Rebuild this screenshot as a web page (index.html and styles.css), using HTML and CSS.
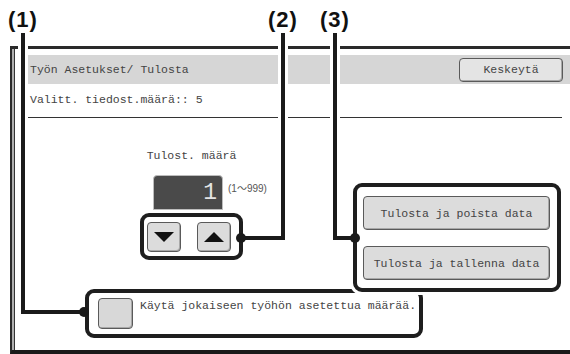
FILE: index.html
```html
<!DOCTYPE html>
<html>
<head>
  <title>Työn Asetukset / Tulosta</title>
  <link rel="stylesheet" href="styles.css">
</head>
<body>
  <div class="page">
    <div class="frame">
      <div class="titlebar">
        <span class="title">Työn Asetukset/ Tulosta</span>
        <button class="btn btn-cancel">Keskeytä</button>
      </div>
      <div class="info">Valitt. tiedost.määrä:: 5</div>

      <div class="main">
        <div class="row">
          <div class="counter">
            <div class="counter-label">Tulost. määrä</div>
            <div class="display-row">
              <div class="display">1</div>
              <span class="range">(1〜999)</span>
            </div>
            <div class="group group-arrows">
              <button class="btn arrow"><span class="tri tri-down"></span></button>
              <button class="btn arrow"><span class="tri tri-up"></span></button>
            </div>
          </div>

          <div class="group group-print">
            <button class="btn btn-wide">Tulosta ja poista data</button>
            <button class="btn btn-wide">Tulosta ja tallenna data</button>
          </div>
        </div>

        <div class="group group-check">
          <span class="checkbox"></span>
          <span class="check-label">Käytä jokaiseen työhön asetettua määrää.</span>
        </div>
      </div>
    </div>

    <!-- callout (1) -->
    <div class="label label-1">(1)</div>
    <div class="vline vline-1"></div>
    <div class="hline hline-1"></div>
    <div class="dot dot-1"></div>

    <!-- callout (2) -->
    <div class="label label-2">(2)</div>
    <div class="vline vline-2"></div>
    <div class="hline hline-2"></div>
    <div class="dot dot-2"></div>

    <!-- callout (3) -->
    <div class="label label-3">(3)</div>
    <div class="vline vline-3"></div>
    <div class="hline hline-3"></div>
    <div class="dot dot-3"></div>
  </div>
</body>
</html>
```

FILE: styles.css
```css
body {
  margin: 0;
  background: #fff;
  font-family: "Liberation Mono", "DejaVu Sans Mono", monospace;
  font-size: 11.5px;
  color: #444;
}

.page {
  position: relative;
  width: 570px;
  height: 354px;
  overflow: hidden;
}

/* screen frame */
.frame {
  box-sizing: border-box;
  height: 308px;
  margin: 46px 0 0 10px;
  padding-left: 16px;
  border-top: 3px solid #2a2a2a;
  border-bottom: 4px solid #1a1a1a;
  border-left: 2px solid #2a2a2a;
  box-shadow: inset 2px 0 0 #b0b0b0, inset 3px 0 0 #333;
}

.titlebar {
  display: flex;
  align-items: center;
  justify-content: space-between;
  height: 29px;
  margin-top: 6px;
  padding: 0 7px 0 2px;
  background: #d6d6d6;
}

.btn {
  box-sizing: border-box;
  font: inherit;
  color: #444;
  background: #dcdcdc;
  border: 1px solid #5a5a5a;
  border-radius: 4px;
  box-shadow: inset -1px -1px 0 #a8a8a8;
  padding: 0;
}

.btn-cancel {
  width: 104px;
  height: 24px;
  background: #e4e4e4;
}

.info {
  margin-right: 8px;
  padding: 9px 0 10px 2px;
  line-height: 14px;
  border-bottom: 1px solid #333;
}

/* main area */
.row {
  display: flex;
  align-items: flex-start;
}

.counter {
  flex: none;
  width: 103px;
  margin: 31px 0 0 112px;
}

.counter-label {
  text-align: center;
  line-height: 14px;
  white-space: nowrap;
}

.display-row {
  display: flex;
  align-items: flex-start;
  margin: 12px 0 0 13px;
  white-space: nowrap;
}

.display {
  box-sizing: border-box;
  flex: none;
  width: 70px;
  height: 35px;
  padding-right: 5px;
  background: #4a4a4a;
  border: 1px solid #bdbdbd;
  border-radius: 4px 4px 0 0;
  color: #e4e4e4;
  font-family: "Liberation Mono", monospace;
  font-size: 23px;
  line-height: 35px;
  text-align: right;
}

.range {
  flex: none;
  margin: 8px 0 0 5px;
  font-family: "Liberation Sans", "Noto Sans CJK JP", sans-serif;
  font-size: 10px;
  line-height: 12px;
  color: #555;
}

.group {
  box-sizing: border-box;
  flex: none;
  border: 4px solid #1e1e1e;
  border-radius: 9px;
  background: #fff;
}

.group-arrows {
  display: flex;
  gap: 16px;
  width: 103px;
  margin-top: 3px;
  padding: 5px 8px 4px 3px;
}

.arrow {
  display: flex;
  align-items: center;
  justify-content: center;
  flex: none;
  width: 34px;
  height: 30px;
}

.tri {
  width: 0;
  height: 0;
  border-left: 10px solid transparent;
  border-right: 10px solid transparent;
}

.tri-down {
  border-top: 10px solid #111;
}

.tri-up {
  border-bottom: 10px solid #111;
}

.group-print {
  position: relative;
  z-index: 2;
  display: flex;
  flex-direction: column;
  gap: 16px;
  width: 208px;
  margin: 65px 0 0 110px;
  padding: 9px 7px 8px 6px;
  box-shadow: 0 0 0 3px #fff;
}

.btn-wide {
  width: 187px;
  height: 34px;
}

.group-check {
  display: flex;
  align-items: flex-start;
  gap: 7px;
  width: 338px;
  margin: -3px 0 0 57px;
  padding: 5px 1px 5px 9px;
}

.checkbox {
  box-sizing: border-box;
  flex: none;
  width: 35px;
  height: 31px;
  background: #d8d8d8;
  border: 1px solid #5a5a5a;
  border-radius: 4px;
  box-shadow: inset -1px -1px 0 #a8a8a8;
}

.check-label {
  margin-top: 1px;
  line-height: 14px;
  white-space: nowrap;
}

/* callouts drawn over the screen */
.label {
  position: absolute;
  top: 8px;
  width: 40px;
  z-index: 5;
  font-family: "Liberation Sans", Arial, sans-serif;
  font-weight: bold;
  font-size: 22px;
  letter-spacing: 1px;
  line-height: 24px;
  text-align: center;
  color: #111;
}

.label-1 { left: 3px; }
.label-2 { left: 263px; }
.label-3 { left: 315px; }

.vline,
.hline,
.dot {
  position: absolute;
  z-index: 5;
  background: #1a1a1a;
}

.vline {
  top: 33px;
  width: 4px;
  box-shadow: 0 0 0 3px #fff;
}

.vline-1 { left: 21px; height: 281px; }
.vline-2 { left: 281px; height: 207px; }
.vline-3 { left: 333px; height: 207px; }

.hline {
  height: 4px;
}

.hline-1 { left: 21px; top: 310px; width: 62px; }
.hline-2 { left: 241px; top: 236px; width: 44px; }
.hline-3 { left: 333px; top: 236px; width: 22px; }

.dot {
  width: 10px;
  height: 10px;
  border-radius: 50%;
}

.dot-1 { left: 79px; top: 307px; }
.dot-2 { left: 236px; top: 233px; }
.dot-3 { left: 350px; top: 233px; }
```
